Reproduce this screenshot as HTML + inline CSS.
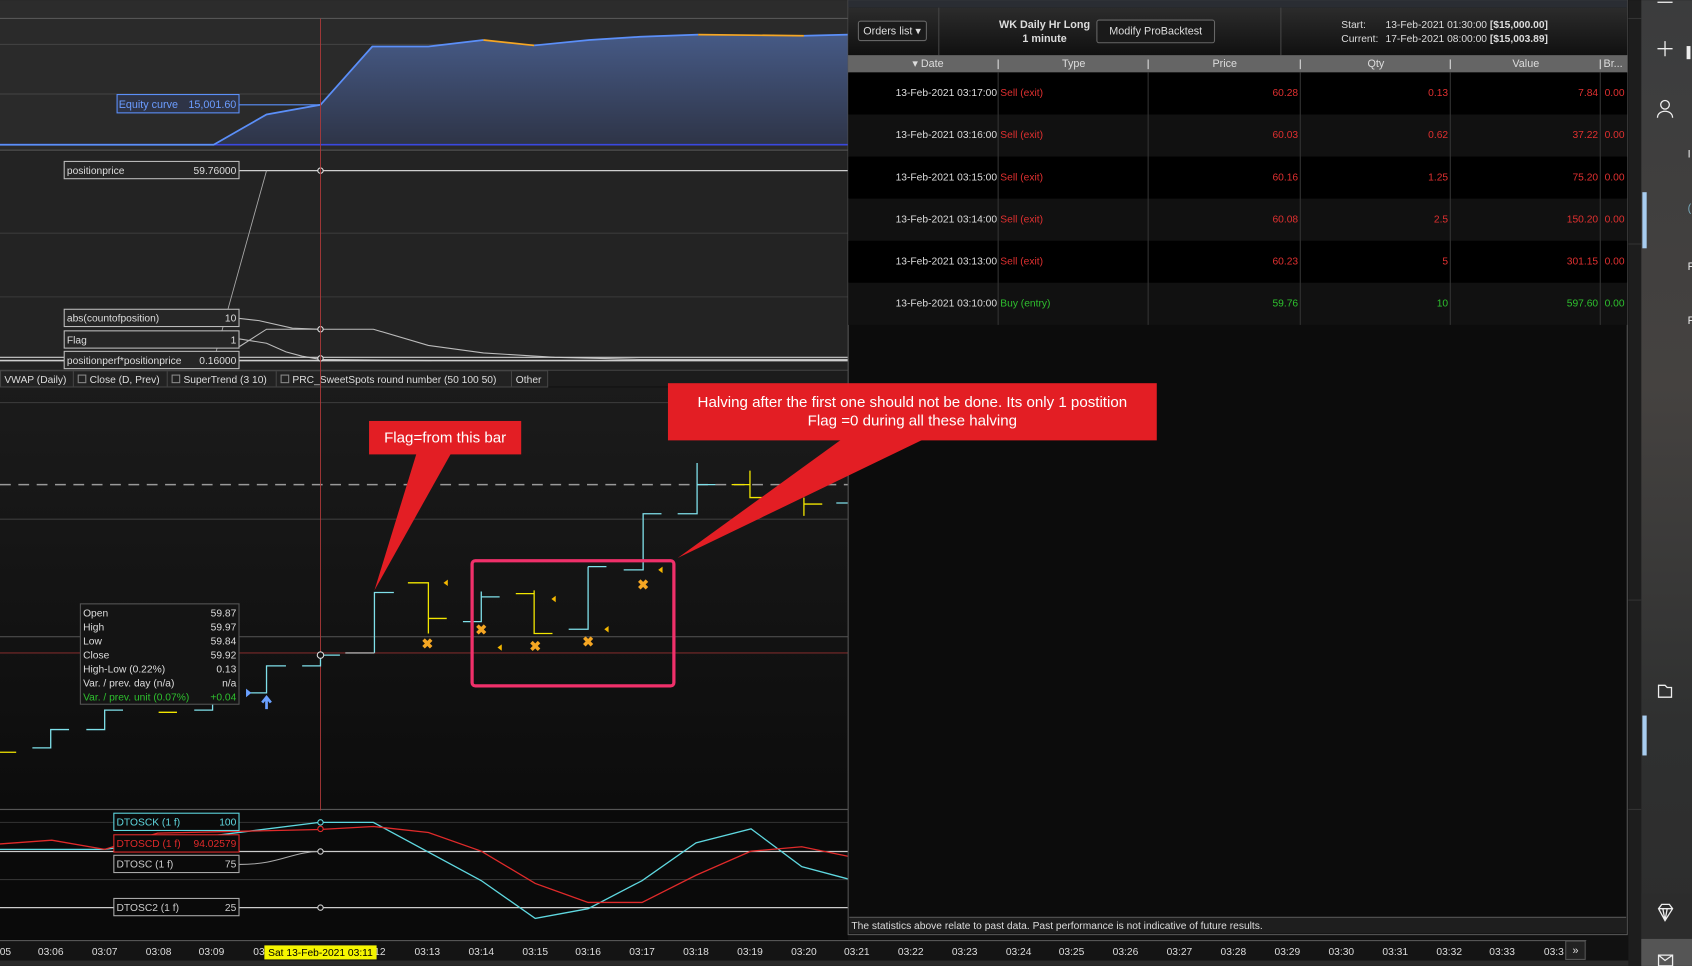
<!DOCTYPE html>
<html><head><meta charset="utf-8"><style>
html,body{margin:0;padding:0;background:#111;overflow:hidden}
svg{display:block}
text{font-family:"Liberation Sans",Arial,sans-serif}
</style></head><body>
<svg width="1692" height="966" viewBox="0 0 1568 895" xmlns="http://www.w3.org/2000/svg">
<defs>
<linearGradient id="eqf" x1="0" y1="0" x2="0" y2="1"><stop offset="0" stop-color="#465a86"/><stop offset="1" stop-color="#2e3447"/></linearGradient>
<linearGradient id="pp" x1="0" y1="0" x2="0" y2="1"><stop offset="0" stop-color="#1b1b1b"/><stop offset="1" stop-color="#0c0c0c"/></linearGradient>
<linearGradient id="hd" x1="0" y1="0" x2="0" y2="1"><stop offset="0" stop-color="#2c2c2c"/><stop offset="1" stop-color="#101010"/></linearGradient>
<linearGradient id="sb" x1="0" y1="0" x2="0" y2="1"><stop offset="0" stop-color="#3b3c3d"/><stop offset="0.4" stop-color="#454240"/><stop offset="0.55" stop-color="#3c3b3a"/><stop offset="0.75" stop-color="#2f3030"/><stop offset="1" stop-color="#2c2c2c"/></linearGradient>
</defs>

<!-- top panel -->
<rect x="0" y="0" width="786" height="140" fill="#2a2a2a"/>
<rect x="0" y="0" width="786" height="17" fill="#2c2c2c"/>
<line x1="0" y1="17" x2="786" y2="17" stroke="#555" stroke-width="1"/>
<line x1="0" y1="41" x2="786" y2="41" stroke="#444" stroke-width="1"/>
<line x1="0" y1="87" x2="786" y2="87" stroke="#444" stroke-width="1"/>
<polygon points="0,134 198,134 247,106 297,97 345,43 397,43 448,37 495,42 546,37 593,34 647,32 745,33 786,32 786,134" fill="url(#eqf)"/>
<line x1="0" y1="134" x2="786" y2="134" stroke="#3a48e0" stroke-width="1.5"/>
<polyline points="0,134 198,134 247,106 297,97 345,43 397,43 448,37" fill="none" stroke="#5b8ff9" stroke-width="1.6"/>
<polyline points="448,37 495,42" fill="none" stroke="#f5a623" stroke-width="1.6"/>
<polyline points="495,42 546,37 593,34 647,32" fill="none" stroke="#5b8ff9" stroke-width="1.6"/>
<polyline points="647,32 745,33" fill="none" stroke="#f5a623" stroke-width="1.6"/>
<polyline points="745,33 786,32" fill="none" stroke="#5b8ff9" stroke-width="1.6"/>
<line x1="221" y1="97" x2="297" y2="97" stroke="#5b8ff9" stroke-width="1"/>
<rect x="108.5" y="87.5" width="113" height="17" fill="#2e3447" stroke="#5b8ff9"/>
<text x="110" y="100" font-size="10" fill="#6b9cff">Equity curve</text>
<text x="219" y="100" font-size="10" fill="#6b9cff" text-anchor="end">15,001.60</text>
<line x1="0" y1="139" x2="786" y2="139" stroke="#555"/>

<!-- indicator panel -->
<rect x="0" y="140" width="786" height="203" fill="#232323"/>
<line x1="0" y1="216" x2="786" y2="216" stroke="#3a3a3a"/>
<line x1="0" y1="275" x2="786" y2="275" stroke="#3a3a3a"/>
<line x1="221" y1="158" x2="786" y2="158" stroke="#cfcfcf" stroke-width="1.2"/>
<line x1="198" y1="334" x2="247" y2="158" stroke="#aaa" stroke-width="0.8"/>
<polyline points="222,295 240,297 271,304 297,305 346,305 397,320 448,327 514,331 593,333 786,333" fill="none" stroke="#bbb" stroke-width="1"/>
<polyline points="222,314 247,318 265,326 280,330 297,333 400,334" fill="none" stroke="#bbb" stroke-width="1"/>
<polyline points="222,321 247,305 297,305" fill="none" stroke="#bbb" stroke-width="1"/>
<line x1="0" y1="331" x2="786" y2="331" stroke="#cfcfcf" stroke-width="1"/>
<line x1="0" y1="334" x2="786" y2="334" stroke="#cfcfcf" stroke-width="1.5"/>
<rect x="59.5" y="149.5" width="162" height="16" fill="#262626" stroke="#bbb"/>
<text x="62" y="161" font-size="9.5" fill="#ddd">positionprice</text><text x="219" y="161" font-size="9.5" fill="#ddd" text-anchor="end">59.76000</text>
<rect x="59.5" y="286.5" width="162" height="16" fill="#262626" stroke="#bbb"/>
<text x="62" y="298" font-size="9.5" fill="#ddd">abs(countofposition)</text><text x="219" y="298" font-size="9.5" fill="#ddd" text-anchor="end">10</text>
<rect x="59.5" y="306.5" width="162" height="16" fill="#262626" stroke="#bbb"/>
<text x="62" y="318" font-size="9.5" fill="#ddd">Flag</text><text x="219" y="318" font-size="9.5" fill="#ddd" text-anchor="end">1</text>
<rect x="59.5" y="325.5" width="162" height="16" fill="#262626" stroke="#bbb"/>
<text x="62" y="337" font-size="9.5" fill="#ddd">positionperf*positionprice</text><text x="219" y="337" font-size="9.5" fill="#ddd" text-anchor="end">0.16000</text>
<circle cx="297" cy="158" r="2.5" fill="#232323" stroke="#ddd"/>
<circle cx="297" cy="305" r="2.5" fill="#232323" stroke="#ddd"/>
<circle cx="297" cy="332" r="2.5" fill="#232323" stroke="#ddd"/>

<!-- legend bar -->
<rect x="0" y="343" width="786" height="15" fill="#1c1c1c"/>
<line x1="0" y1="343" x2="786" y2="343" stroke="#444"/>
<rect x="0.5" y="343.5" width="507" height="15" fill="#222" stroke="#444"/>
<text x="4" y="355" font-size="9.5" fill="#ddd">VWAP (Daily)</text>
<line x1="68" y1="344" x2="68" y2="358" stroke="#444"/>
<rect x="72.5" y="347.5" width="7" height="7" fill="none" stroke="#888"/><text x="83" y="355" font-size="9.5" fill="#ddd">Close (D, Prev)</text>
<line x1="155" y1="344" x2="155" y2="358" stroke="#444"/>
<rect x="159.5" y="347.5" width="7" height="7" fill="none" stroke="#888"/><text x="170" y="355" font-size="9.5" fill="#ddd">SuperTrend (3 10)</text>
<line x1="256" y1="344" x2="256" y2="358" stroke="#444"/>
<rect x="260.5" y="347.5" width="7" height="7" fill="none" stroke="#888"/><text x="271" y="355" font-size="9.5" fill="#ddd">PRC_SweetSpots round number (50 100 50)</text>
<line x1="474" y1="344" x2="474" y2="358" stroke="#444"/>
<text x="478" y="355" font-size="9.5" fill="#ddd">Other</text>

<!-- price panel -->
<rect x="0" y="359" width="786" height="391" fill="url(#pp)"/>
<line x1="0" y1="373" x2="786" y2="373" stroke="#3c3c3c"/>
<line x1="0" y1="449" x2="786" y2="449" stroke="#999" stroke-dasharray="10,7" stroke-width="1.3"/>
<line x1="0" y1="481" x2="786" y2="481" stroke="#3c3c3c"/>
<line x1="0" y1="590" x2="786" y2="590" stroke="#555"/>
<line x1="0" y1="605" x2="786" y2="605" stroke="#7a2a2a"/>
<line x1="0" y1="750" x2="786" y2="750" stroke="#555"/>
<line x1="297" y1="17" x2="297" y2="870" stroke="#b03a3a" stroke-width="0.8"/>

<!-- bars -->
<g stroke="#7fe0ea" stroke-width="1.2" fill="none">
<path d="M30,693H47V676H64M80,676H97V658H114M180,658H197V640M230,642H247V617H265M280,617H297V607H315M347,605V549H365"/>
<path d="M429,576H446V548M446,553H463M527,583H545V525M545,525H562M578,528H596V476H613M628,476H646V429M646,449H663M775,466H786"/>
</g>
<path d="M320,605H347" stroke="#aaa" stroke-width="1.2"/>
<g stroke="#f2e600" stroke-width="1.2" fill="none">
<path d="M0,697H15M147,660H164M378,540H397V587M397,573H414M478,550H495V547V587H512M678,449H695V436V461H712M745,461V478M745,467H762"/>
</g>
<g fill="#f5a623" font-size="13" font-weight="bold" text-anchor="middle">
<text x="396" y="601">✖</text><text x="446" y="588">✖</text><text x="496" y="603">✖</text><text x="545" y="599">✖</text><text x="596" y="546">✖</text>
</g>
<g fill="#f5b800">
<polygon points="411,540 415,537 415,543"/><polygon points="461,600 465,597 465,603"/><polygon points="511,555 515,552 515,558"/><polygon points="560,583 564,580 564,586"/><polygon points="610,528 614,525 614,531"/>
</g>
<polygon points="228,638 233,642 228,646" fill="#6aa0ff"/>
<path d="M247,646V657M243,651L247,646L251,651" stroke="#6aa0ff" stroke-width="2.5" fill="none"/>
<circle cx="297" cy="607" r="3" fill="#111" stroke="#ddd"/>

<!-- OHLC box -->
<rect x="74.5" y="559.5" width="147" height="93" fill="#141414" stroke="#555"/>
<g font-size="9.5" fill="#ddd">
<text x="77" y="571">Open</text><text x="219" y="571" text-anchor="end">59.87</text>
<text x="77" y="584">High</text><text x="219" y="584" text-anchor="end">59.97</text>
<text x="77" y="597">Low</text><text x="219" y="597" text-anchor="end">59.84</text>
<text x="77" y="610">Close</text><text x="219" y="610" text-anchor="end">59.92</text>
<text x="77" y="623">High-Low (0.22%)</text><text x="219" y="623" text-anchor="end">0.13</text>
<text x="77" y="636">Var. / prev. day (n/a)</text><text x="219" y="636" text-anchor="end">n/a</text>
<text x="77" y="649" fill="#2ec02e">Var. / prev. unit (0.07%)</text><text x="219" y="649" text-anchor="end" fill="#2ec02e">+0.04</text>
</g>

<!-- oscillator -->
<rect x="0" y="751" width="786" height="120" fill="#0a0a0a"/>
<line x1="0" y1="762" x2="786" y2="762" stroke="#333"/>
<line x1="0" y1="789" x2="786" y2="789" stroke="#ccc" stroke-width="1.2"/>
<line x1="0" y1="815" x2="786" y2="815" stroke="#333"/>
<line x1="0" y1="841" x2="786" y2="841" stroke="#ccc" stroke-width="1.2"/>
<polyline points="0,787 97,787 296,762 346,762 446,816 496,851 545,842 595,816 645,781 696,768 743,803 788,815" fill="none" stroke="#5fd8e0" stroke-width="1.2"/>
<polyline points="0,782 48,778.5 97,787 146,772 296,768.6 346,765.8 397,771.4 446,788.7 496,818.6 545,836.2 595,836.2 645,811 696,788.7 743,784.6 788,793.9" fill="none" stroke="#e02a2a" stroke-width="1.2"/>
<path d="M222,801 C260,801 270,789 297,789" stroke="#aaa" fill="none"/>
<rect x="105.5" y="753.5" width="116" height="16" fill="#0a0a0a" stroke="#5fd8e0"/>
<text x="108" y="765" font-size="9.5" fill="#5fd8e0">DTOSCK (1 f)</text><text x="219" y="765" font-size="9.5" fill="#5fd8e0" text-anchor="end">100</text>
<rect x="105.5" y="773.5" width="116" height="16" fill="#0a0a0a" stroke="#e02a2a"/>
<text x="108" y="785" font-size="9.5" fill="#e02a2a">DTOSCD (1 f)</text><text x="219" y="785" font-size="9.5" fill="#e02a2a" text-anchor="end">94.02579</text>
<rect x="105.5" y="792.5" width="116" height="16" fill="#0a0a0a" stroke="#aaa"/>
<text x="108" y="804" font-size="9.5" fill="#ccc">DTOSC (1 f)</text><text x="219" y="804" font-size="9.5" fill="#ccc" text-anchor="end">75</text>
<rect x="105.5" y="832.5" width="116" height="16" fill="#0a0a0a" stroke="#aaa"/>
<text x="108" y="844" font-size="9.5" fill="#ccc">DTOSC2 (1 f)</text><text x="219" y="844" font-size="9.5" fill="#ccc" text-anchor="end">25</text>
<circle cx="297" cy="762" r="2.5" fill="#0a0a0a" stroke="#5fd8e0"/>
<circle cx="297" cy="768" r="2.5" fill="#0a0a0a" stroke="#e02a2a"/>
<circle cx="297" cy="789" r="2.5" fill="#0a0a0a" stroke="#ccc"/>
<circle cx="297" cy="841" r="2.5" fill="#0a0a0a" stroke="#ccc"/>

<!-- time axis -->
<rect x="0" y="871" width="1470" height="19" fill="#141414"/>
<line x1="0" y1="871.5" x2="1470" y2="871.5" stroke="#555"/>
<g font-size="9.5" fill="#ddd" text-anchor="middle">
<text x="5" y="885">05</text><text x="47" y="885">03:06</text><text x="97" y="885">03:07</text><text x="147" y="885">03:08</text><text x="196" y="885">03:09</text><text x="240" y="885">03</text><text x="352" y="885">12</text>
<text x="396" y="885">03:13</text><text x="446" y="885">03:14</text><text x="496" y="885">03:15</text><text x="545" y="885">03:16</text><text x="595" y="885">03:17</text><text x="645" y="885">03:18</text><text x="695" y="885">03:19</text><text x="745" y="885">03:20</text><text x="794" y="885">03:21</text><text x="844" y="885">03:22</text><text x="894" y="885">03:23</text><text x="944" y="885">03:24</text><text x="993" y="885">03:25</text><text x="1043" y="885">03:26</text><text x="1093" y="885">03:27</text><text x="1143" y="885">03:28</text><text x="1193" y="885">03:29</text><text x="1243" y="885">03:30</text><text x="1293" y="885">03:31</text><text x="1343" y="885">03:32</text><text x="1392" y="885">03:33</text><text x="1440" y="885">03:3</text>
</g>
<rect x="245" y="876" width="104" height="13" fill="#f5f500"/>
<text x="297" y="886" font-size="9.5" fill="#000" text-anchor="middle">Sat 13-Feb-2021 03:11</text>
<rect x="1451" y="872" width="18" height="17" fill="#222" stroke="#555"/>
<text x="1460" y="884" font-size="10" fill="#ddd" text-anchor="middle">»</text>
<rect x="0" y="890" width="1520" height="5" fill="#2a2a2a"/>

<!-- orders panel -->
<rect x="786" y="0" width="722" height="866" fill="#0c0c0c" stroke="#555"/>
<rect x="786" y="0" width="722" height="7" fill="#2a2d33"/>
<rect x="786" y="7" width="722" height="44" fill="url(#hd)"/>
<line x1="870" y1="7" x2="870" y2="51" stroke="#444"/>
<line x1="1187" y1="7" x2="1187" y2="51" stroke="#444"/>
<rect x="795.5" y="19.5" width="63" height="18" rx="2" fill="#1a1a1a" stroke="#666"/>
<text x="800" y="32" font-size="10" fill="#ddd">Orders list ▾</text>
<text x="968" y="26" font-size="10" font-weight="bold" fill="#ddd" text-anchor="middle">WK Daily Hr Long</text>
<text x="968" y="39" font-size="10" font-weight="bold" fill="#ddd" text-anchor="middle">1 minute</text>
<rect x="1016.5" y="18.5" width="109" height="21" rx="2" fill="#1a1a1a" stroke="#666"/>
<text x="1071" y="32" font-size="10" fill="#ddd" text-anchor="middle">Modify ProBacktest</text>
<text x="1243" y="26" font-size="9.5" fill="#ddd">Start:</text>
<text x="1284" y="26" font-size="9.5" fill="#ddd">13-Feb-2021 01:30:00 <tspan font-weight="bold">[$15,000.00]</tspan></text>
<text x="1243" y="39" font-size="9.5" fill="#ddd">Current:</text>
<text x="1284" y="39" font-size="9.5" fill="#ddd">17-Feb-2021 08:00:00 <tspan font-weight="bold">[$15,003.89]</tspan></text>
<rect x="786" y="51" width="722" height="16" fill="#656565"/>
<g font-size="10" fill="#ddd" text-anchor="middle">
<text x="860" y="62">▾ Date</text><text x="995" y="62">Type</text><text x="1135" y="62">Price</text><text x="1275" y="62">Qty</text><text x="1414" y="62">Value</text>
</g>
<text x="1486" y="62" font-size="10" fill="#ddd">Br...</text>
<g stroke="#ddd"><line x1="925" y1="55" x2="925" y2="64"/><line x1="1064" y1="55" x2="1064" y2="64"/><line x1="1205" y1="55" x2="1205" y2="64"/><line x1="1344" y1="55" x2="1344" y2="64"/><line x1="1483" y1="55" x2="1483" y2="64"/></g>
<rect x="786" y="67" width="722" height="39" fill="#000"/>
<rect x="786" y="106" width="722" height="39" fill="#111"/>
<rect x="786" y="145" width="722" height="39" fill="#000"/>
<rect x="786" y="184" width="722" height="39" fill="#111"/>
<rect x="786" y="223" width="722" height="39" fill="#000"/>
<rect x="786" y="262" width="722" height="39" fill="#111"/>
<g stroke="#333"><line x1="925" y1="67" x2="925" y2="301"/><line x1="1064" y1="67" x2="1064" y2="301"/><line x1="1205" y1="67" x2="1205" y2="301"/><line x1="1344" y1="67" x2="1344" y2="301"/><line x1="1483" y1="67" x2="1483" y2="301"/></g>
<g font-size="9.5">
<g fill="#ddd" text-anchor="end"><text x="924" y="89">13-Feb-2021 03:17:00</text><text x="924" y="128">13-Feb-2021 03:16:00</text><text x="924" y="167">13-Feb-2021 03:15:00</text><text x="924" y="206">13-Feb-2021 03:14:00</text><text x="924" y="245">13-Feb-2021 03:13:00</text><text x="924" y="284">13-Feb-2021 03:10:00</text></g>
<g fill="#e03030"><text x="927" y="89">Sell (exit)</text><text x="927" y="128">Sell (exit)</text><text x="927" y="167">Sell (exit)</text><text x="927" y="206">Sell (exit)</text><text x="927" y="245">Sell (exit)</text>
<text x="1487" y="89">0.00</text><text x="1487" y="128">0.00</text><text x="1487" y="167">0.00</text><text x="1487" y="206">0.00</text><text x="1487" y="245">0.00</text></g>
<g fill="#e03030" text-anchor="end">
<text x="1203" y="89">60.28</text><text x="1342" y="89">0.13</text><text x="1481" y="89">7.84</text>
<text x="1203" y="128">60.03</text><text x="1342" y="128">0.62</text><text x="1481" y="128">37.22</text>
<text x="1203" y="167">60.16</text><text x="1342" y="167">1.25</text><text x="1481" y="167">75.20</text>
<text x="1203" y="206">60.08</text><text x="1342" y="206">2.5</text><text x="1481" y="206">150.20</text>
<text x="1203" y="245">60.23</text><text x="1342" y="245">5</text><text x="1481" y="245">301.15</text>
</g>
<g fill="#2ec02e"><text x="927" y="284">Buy (entry)</text><text x="1487" y="284">0.00</text></g>
<g fill="#2ec02e" text-anchor="end"><text x="1203" y="284">59.76</text><text x="1342" y="284">10</text><text x="1481" y="284">597.60</text></g>
</g>
<rect x="787" y="850" width="720" height="15" fill="#1e1e1e"/>
<line x1="787" y1="850" x2="1507" y2="850" stroke="#555"/>
<text x="789" y="861" font-size="9.5" fill="#ddd">The statistics above relate to past data. Past performance is not indicative of future results.</text>

<!-- strip between -->
<rect x="1509" y="0" width="12" height="895" fill="#1d1d1d"/>
<g stroke="#333"><line x1="1509" y1="17" x2="1521" y2="17"/><line x1="1509" y1="226" x2="1521" y2="226"/><line x1="1509" y1="556" x2="1521" y2="556"/><line x1="1509" y1="750" x2="1521" y2="750"/></g>

<!-- sidebar -->
<rect x="1521" y="0" width="47" height="895" fill="url(#sb)"/>
<rect x="1521" y="828" width="47" height="42" fill="#2c2c2c"/>
<rect x="1521" y="870" width="47" height="25" fill="#555"/>
<rect x="1522" y="178" width="4" height="52" fill="#a8cdf0"/>
<rect x="1522" y="663" width="4" height="37" fill="#a8cdf0"/>
<g stroke="#eee" stroke-width="1.2" fill="none">
<path d="M1536,2H1550"/>
<path d="M1543,38V52M1536,45H1550"/>
<circle cx="1543" cy="97" r="4"/><path d="M1536,109C1536,101 1550,101 1550,109"/>
<path d="M1537,635H1543L1545,637H1549V646H1537Z"/>
<path d="M1537,842L1540,838H1547L1550,842L1543,853ZM1537,842H1550M1541,842L1543,853L1545,842"/>
<path d="M1537,885H1550V895H1537ZM1537,885L1543,890L1550,885"/>
</g>
<g font-size="10" fill="#eee"><text x="1563" y="52">▌</text><text x="1564" y="146">I</text><text x="1564" y="196" fill="#7ab">(</text><text x="1564" y="250">F</text><text x="1564" y="300">F</text></g>

<!-- callouts (on top) -->
<polygon points="386,420 418,420 347,547" fill="#e31e24"/>
<rect x="342" y="390" width="141" height="31" fill="#e31e24"/>
<text x="412.5" y="410" font-size="14" fill="#fff" text-anchor="middle">Flag=from this bar</text>
<polygon points="780,407 856,407 628,517" fill="#e31e24"/>
<rect x="619" y="355" width="453" height="53" fill="#e31e24"/>
<text x="845.5" y="377" font-size="14" fill="#fff" text-anchor="middle">Halving after the first one should not be done. Its only 1 postition</text>
<text x="845.5" y="394" font-size="14" fill="#fff" text-anchor="middle">Flag =0 during all these halving</text>
<rect x="437.5" y="519.5" width="187" height="116" rx="3" fill="none" stroke="#f0306a" stroke-width="3"/>
</svg>
</body></html>
